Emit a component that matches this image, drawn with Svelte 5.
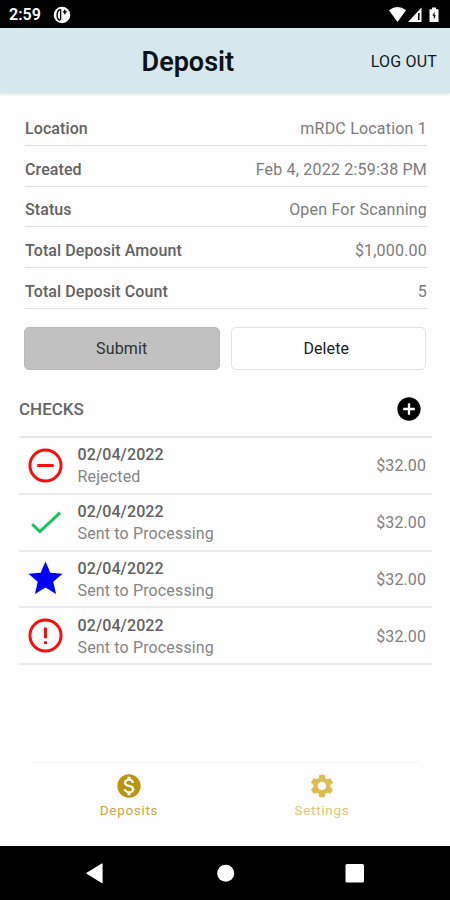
<script>
  const details = [
    { label: 'Location', value: 'mRDC Location 1' },
    { label: 'Created', value: 'Feb 4, 2022 2:59:38 PM' },
    { label: 'Status', value: 'Open For Scanning' },
    { label: 'Total Deposit Amount', value: '$1,000.00' },
    { label: 'Total Deposit Count', value: '5' }
  ];

  const icons = {
    star: 'M12 17.27L18.18 21l-1.64-7.03L22 9.24l-7.19-.61L12 2 9.19 8.63 2 9.24l5.46 4.73L5.82 21z',
    add: 'M12 2C6.48 2 2 6.48 2 12s4.48 10 10 10 10-4.48 10-10S17.52 2 12 2zm5 11h-4v4h-2v-4H7v-2h4V7h2v4h4v2z',
    money: 'M12 2C6.48 2 2 6.48 2 12s4.48 10 10 10 10-4.48 10-10S17.52 2 12 2zm1.41 16.09V20h-2.67v-1.93c-1.71-.36-3.16-1.46-3.27-3.4h1.96c.1 1.05.82 1.87 2.65 1.87 1.96 0 2.4-.98 2.4-1.59 0-.83-.44-1.61-2.67-2.14-2.48-.6-4.18-1.62-4.18-3.67 0-1.72 1.39-2.84 3.11-3.21V4h2.67v1.95c1.86.45 2.79 1.86 2.85 3.39H14.3c-.05-1.11-.64-1.87-2.22-1.87-1.5 0-2.4.68-2.4 1.64 0 .84.65 1.39 2.67 1.91s4.18 1.39 4.18 3.91c-.01 1.83-1.38 2.83-3.12 3.16z',
    settings: 'M19.14 12.94c.04-.3.06-.61.06-.94 0-.32-.02-.64-.07-.94l2.03-1.58c.18-.14.23-.41.12-.61l-1.92-3.32c-.12-.22-.37-.29-.59-.22l-2.39.96c-.5-.38-1.03-.7-1.62-.94l-.36-2.54c-.04-.24-.24-.41-.48-.41h-3.84c-.24 0-.43.17-.47.41l-.36 2.54c-.59.24-1.13.57-1.62.94l-2.39-.96c-.22-.08-.47 0-.59.22L2.74 8.87c-.12.21-.08.47.12.61l2.03 1.58c-.05.3-.09.63-.09.94s.02.64.07.94l-2.03 1.58c-.18.14-.23.41-.12.61l1.92 3.32c.12.22.37.29.59.22l2.39-.96c.5.38 1.03.7 1.62.94l.36 2.54c.05.24.24.41.48.41h3.84c.24 0 .44-.17.47-.41l.36-2.54c.59-.24 1.13-.56 1.62-.94l2.39.96c.22.08.47 0 .59-.22l1.92-3.32c.12-.22.07-.47-.12-.61l-2.01-1.58zM12 15.6c-1.98 0-3.6-1.62-3.6-3.6s1.62-3.6 3.6-3.6 3.6 1.62 3.6 3.6-1.62 3.6-3.6 3.6z'
  };

  const checks = [
    { icon: 'rejected', status: 'Rejected' },
    { icon: 'done', status: 'Sent to Processing' },
    { icon: 'star', status: 'Sent to Processing' },
    { icon: 'error', status: 'Sent to Processing' }
  ];
</script>

<div class="screen">
  <div class="statusbar">
    <span class="clock">2:59</span>
    <svg width="18" height="18" viewBox="0 0 18 18">
      <circle cx="9" cy="9" r="8.3" fill="#fff" />
      <path d="M7.5 3.5C3.4 3.7 2.8 12.9 7 14.3M7.6 3.5v10.8M11.8 3.8v4.4M9.8 5.9h4" fill="none" stroke="#000" stroke-width="1.4" />
    </svg>
    <svg class="signals" width="54" height="18" viewBox="0 0 54 18">
      <path d="M1 4.2Q9.5-2 18 4.2L9.5 16Z" fill="#fff" />
      <path d="M20 16L33.5 1.5V16Z" fill="#fff" />
      <path d="M30.8 7v7" stroke="#000" stroke-width="1.6" />
      <path d="M41.5 3.2H44V1.5h4v1.7h2.5V16h-9Z" fill="#fff" />
      <path d="M46.5 5.5l-2 4.3h1.3v3.7l2-4.3h-1.3Z" fill="#000" />
    </svg>
  </div>

  <header>
    <h1>Deposit</h1>
    <span class="logout">LOG OUT</span>
  </header>

  <main>
    <section class="details">
      {#each details as row}
        <div class="detail">
          <span class="label">{row.label}</span>
          <span class="value">{row.value}</span>
        </div>
      {/each}
    </section>

    <div class="actions">
      <button class="submit">Submit</button>
      <button class="delete">Delete</button>
    </div>

    <div class="checks-head">
      <h2>CHECKS</h2>
      <svg width="28" height="28" viewBox="0 0 24 24"><path d={icons.add} /></svg>
    </div>

    <section class="checks">
      {#each checks as check}
        <div class="check">
          <svg class={check.icon} width="41" height="41" viewBox="0 0 24 24">
            {#if check.icon === 'rejected'}
              <circle cx="12" cy="12" r="9.1" />
              <path d="M7.2 12h9.6" />
            {:else if check.icon === 'done'}
              <path d="M4.2 13l4.5 4.3L20.6 6.2" />
            {:else if check.icon === 'star'}
              <path d={icons.star} />
            {:else}
              <circle cx="12" cy="12" r="9.1" />
              <path d="M12 7.3v6.3M12 15.4v1.6" />
            {/if}
          </svg>
          <div class="info">
            <span class="date">02/04/2022</span>
            <span class="state">{check.status}</span>
          </div>
          <span class="sum">$32.00</span>
        </div>
      {/each}
    </section>
  </main>

  <nav class="tabs">
    <div class="tab active">
      <svg width="28" height="28" viewBox="0 0 24 24"><path d={icons.money} /></svg>
      <span>Deposits</span>
    </div>
    <div class="tab">
      <svg width="28" height="28" viewBox="0 0 24 24"><path d={icons.settings} /></svg>
      <span>Settings</span>
    </div>
  </nav>

  <div class="navbar">
    <svg width="450" height="54" viewBox="0 0 450 54" fill="#fff">
      <path d="M87 27.3L102 18V36.6Z" stroke="#fff" stroke-width="1.2" stroke-linejoin="round" />
      <circle cx="225.7" cy="27.3" r="8.5" />
      <rect x="345.5" y="18" width="18.5" height="18.5" rx="1.5" />
    </svg>
  </div>
</div>

<style>
  :global(body) { margin: 0; background: #fff; }
  .screen {
    width: 450px; height: 900px; display: flex; flex-direction: column; overflow: hidden;
    background: #fefefe; font-family: Roboto, "Liberation Sans", sans-serif; color: #777;
  }
  svg { display: block; flex: none; }
  .statusbar { height: 28px; flex: none; box-sizing: border-box; background: #000; display: flex; align-items: center; padding: 1px 14px 0 9px; }
  .clock { width: 44px; color: #fff; font-size: 16px; font-weight: 600; }
  .signals { margin-left: auto; margin-right: -6px; }
  header {
    height: 65px; flex: none; background: #d6e8ed; display: flex; align-items: center;
    box-sizing: border-box; padding: 0 13px 0 5px; box-shadow: 0 1px 3px rgba(0,0,0,.14);
  }
  h1 { flex: 1; margin: 0; text-align: center; font-size: 27px; line-height: 34px; font-weight: 600; color: #0b1216; padding-top: 2px; }
  .logout { font-size: 16px; color: #10181b; letter-spacing: .2px; padding-top: 1px; }
  main { flex: 1; padding: 0 18px 0 19px; }
  .details { padding: 12px 5px 0 6px; }
  .detail {
    height: 40.8px; box-sizing: border-box; border-bottom: 1px solid #dedede; display: flex; justify-content: space-between;
    align-items: center; padding-top: 8px; font-size: 16px; line-height: 20px; white-space: nowrap;
  }
  .label { color: #626262; font-weight: 500; letter-spacing: .09px; }
  .value { letter-spacing: .2px; color: #7c7c7c; }
  .actions { display: grid; grid-template-columns: 1fr 1fr; gap: 11px; padding: 18px 6px 0 5px; }
  button { height: 43px; box-sizing: border-box; border-radius: 5px; font-family: inherit; font-size: 16px; padding: 0; }
  .submit { background: #c1c1c1; border: 1px solid #bababa; color: #303030; letter-spacing: .15px; }
  .delete { background: #fff; border: 1px solid #e2e2e2; color: #202020; padding-right: 4px; letter-spacing: .1px; }
  .checks-head { height: 66px; display: flex; justify-content: space-between; align-items: center; padding: 12px 9px 0 0; box-sizing: border-box; }
  h2 { margin: 0; padding-top: 1px; font-size: 17px; font-weight: 500; color: #666; }
  .checks { border-top: 2px solid #e8e8e8; }
  .check { height: 56.8px; box-sizing: border-box; border-bottom: 2px solid #ebebeb; display: flex; align-items: center; padding: 0 6px 0 5.5px; }
  .rejected, .error, .done { fill: none; stroke: #f90d0d; stroke-width: 1.75; }
  .done { stroke: #14c35a; }
  .star { fill: #0000fe; }
  .info { display: flex; flex-direction: column; margin-left: 12px; padding-top: 2px; line-height: 22px; font-size: 16px; white-space: nowrap; }
  .date { color: #626262; font-weight: 500; letter-spacing: .1px; }
  .state { letter-spacing: .15px; color: #858585; }
  .sum { margin-left: auto; padding-top: 1px; font-size: 16px; letter-spacing: .1px; color: #808080; }
  .tabs { height: 84px; flex: none; display: flex; box-sizing: border-box; margin: 0 32px; border-top: 1px solid #f6f6f6; padding-top: 9px; }
  .tab { flex: 1; display: flex; flex-direction: column; align-items: center; font-size: 13.5px; letter-spacing: .7px; color: #dcc873; }
  .tab svg { fill: #dfbc50; }
  .tab.active { color: #c9a642; }
  .tab.active svg { fill: #bd940d; }
  .tab span { line-height: 20px; padding-left: 1px; }
  .navbar { height: 54px; flex: none; background: #000; }
</style>
